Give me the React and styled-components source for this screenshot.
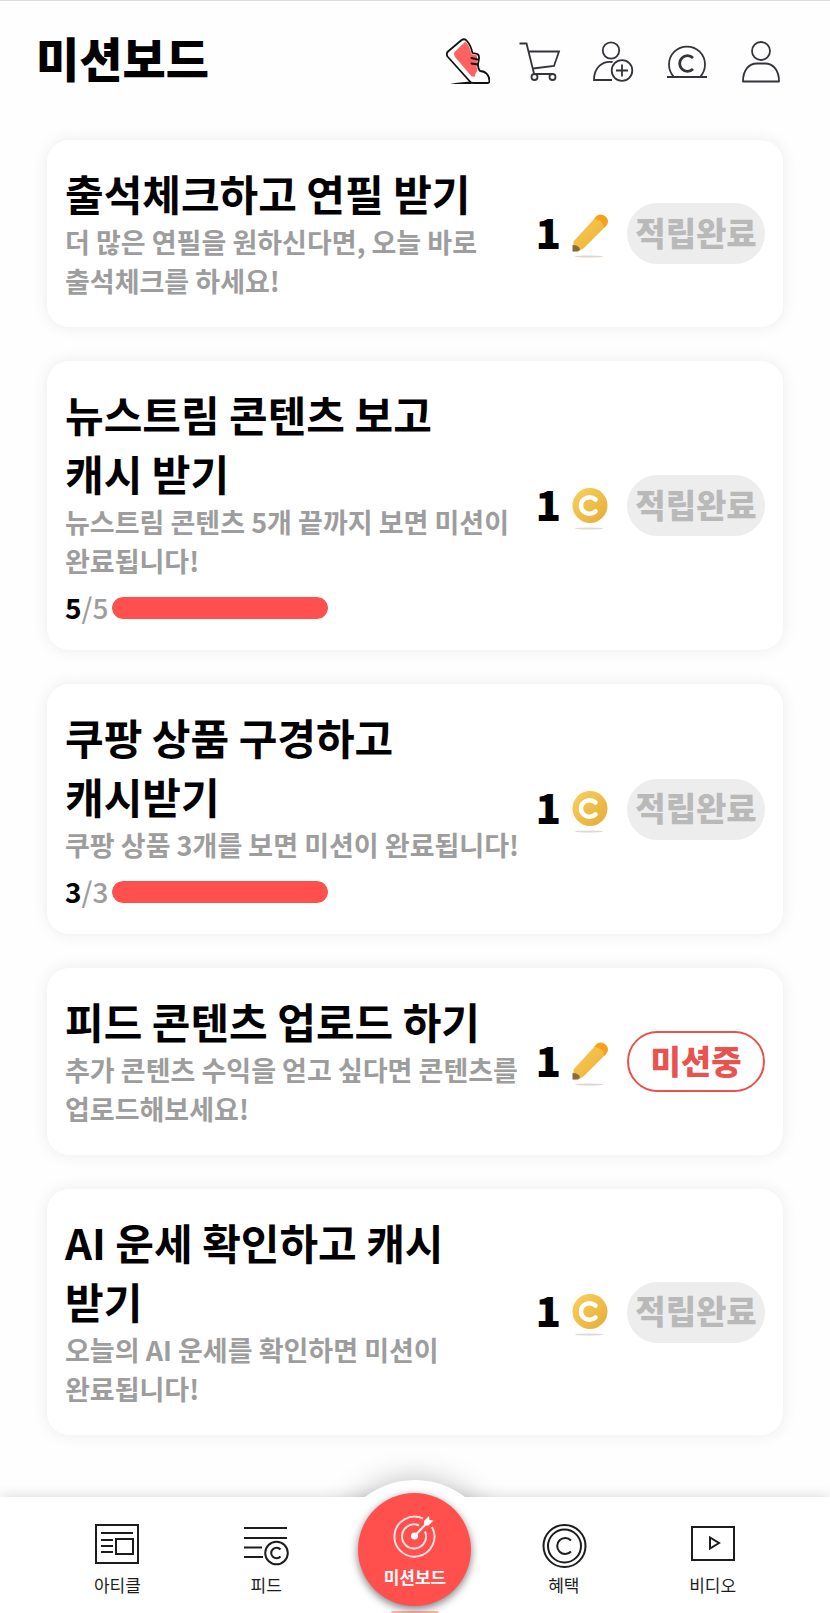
import React from 'react'
import styled, { createGlobalStyle, ThemeProvider } from 'styled-components';

const theme = {
  color: {
    primary: '#ff504d',
    danger: '#e8524f',
    black: '#000',
    icon: '#33343a',
    gray: '#9d9d9d',
    disabled: '#ededed',
    disabledText: '#b9b9b9',
  },
};

const GlobalStyle = createGlobalStyle`
  * {
    box-sizing: border-box;
  }

  body {
    margin: 0;
    background: #fefefe;
    color: #000;
    font-family: 'Noto Sans CJK KR', 'Noto Sans', sans-serif;
    word-break: keep-all;
  }

  h1, h2, p, ul {
    margin: 0;
    padding: 0;
  }
`;

const Page = styled.div`
  min-height: 100vh;
  display: flex;
  flex-direction: column;
  border-top: 1px solid #dcdcdc;
`;

const Header = styled.header`
  height: 122px;
  padding: 0 48px 0 36px;
  display: flex;
  justify-content: space-between;
  align-items: center;
`;

const PageTitle = styled.h1`
  padding-bottom: 10px;
  font-size: 47px;
  font-weight: 900;
  line-height: 60px;
`;

const Tools = styled.div`
  display: flex;
  gap: 29px;
`;

const IconButton = styled.button`
  width: 44px;
  height: 48px;
  padding: 0;
  border: 0;
  background: none;
  color: ${({ theme }) => theme.color.icon};
  cursor: pointer;

  svg {
    display: block;
  }
`;

const MissionList = styled.ul`
  flex: 1;
  padding: 17px 47px 59px;
  display: flex;
  flex-direction: column;
  gap: 34px;
  list-style: none;
`;

const Card = styled.li`
  padding: 23px 18px 27px;
  display: flex;
  background: #fff;
  border-radius: 22px;
  box-shadow: 0 0 16px rgba(0, 0, 0, 0.08);
`;

const Content = styled.div`
  flex: 1;
  padding-right: 16px;
`;

const Title = styled.h2`
  padding-right: 24px;
  font-size: 42px;
  font-weight: 700;
  line-height: 59px;
`;

const Description = styled.p`
  color: ${({ theme }) => theme.color.gray};
  font-size: 27px;
  font-weight: 700;
  line-height: 39px;
`;

const Progress = styled.div`
  height: 31px;
  margin-top: 12px;
  display: flex;
  align-items: center;
  gap: 4px;
`;

const Count = styled.span`
  color: ${({ theme }) => theme.color.gray};
  font-size: 28px;
  font-weight: 500;
  line-height: 31px;

  strong {
    color: ${({ theme }) => theme.color.black};
    font-weight: 700;
  }
`;

const Track = styled.div`
  width: 216px;
  height: 22px;
  border-radius: 11px;
  background: ${({ theme }) => theme.color.disabled};
  overflow: hidden;
`;

const Fill = styled.div`
  height: 100%;
  border-radius: 11px;
  background: ${({ theme }) => theme.color.primary};
`;

const Side = styled.div`
  padding-top: 4px;
  display: flex;
  align-items: center;
`;

const Amount = styled.span`
  padding-bottom: 6px;
  font-size: 42px;
  font-weight: 900;
  line-height: 60px;
`;

const Reward = styled.div`
  margin-right: 18px;
  display: flex;
  align-items: center;
  gap: 10px;
`;

const StatusButton = styled.button`
  width: 138px;
  height: 61px;
  padding: 0 0 4px;
  flex: none;
  border: ${({ $active, theme }) => ($active ? `2px solid ${theme.color.danger}` : '0')};
  border-radius: 31px;
  background: ${({ $active, theme }) => ($active ? '#fff' : theme.color.disabled)};
  color: ${({ $active, theme }) => ($active ? theme.color.danger : theme.color.disabledText)};
  font-family: inherit;
  font-size: 33px;
  font-weight: 900;
  line-height: 48px;
  white-space: nowrap;
`;

const NavBar = styled.nav`
  height: 116px;
  padding: 0 43px;
  position: relative;
  display: grid;
  grid-template-columns: repeat(5, 1fr);
  background: #fff;
  box-shadow: 0 -2px 12px rgba(0, 0, 0, 0.12);
`;

const NavItem = styled.a`
  padding-top: 24px;
  display: flex;
  flex-direction: column;
  align-items: center;
  gap: 6px;
  position: relative;
  color: #1c1c1c;
  font-size: 17px;
  font-weight: 400;
  line-height: 24px;
  text-decoration: none;
`;

// white bump behind the round button, clipped at the bar's bottom edge
const Bump = styled.span`
  position: absolute;
  left: 50%;
  bottom: 0;
  width: 260px;
  height: 166px;
  transform: translateX(-50%);
  overflow: hidden;

  &::before {
    content: '';
    position: absolute;
    top: 33px;
    left: 48px;
    width: 164px;
    height: 164px;
    border-radius: 50%;
    background: #fff;
    box-shadow: 0 0 30px rgba(0, 0, 0, 0.26);
  }

  &::after {
    content: '';
    position: absolute;
    left: 0;
    right: 0;
    bottom: 0;
    height: 116px;
    background: #fff;
  }
`;

// top of the glow under the round button
const Glow = styled.span`
  position: absolute;
  left: 50%;
  bottom: 0;
  width: 48px;
  height: 2px;
  transform: translateX(-50%);
  border-radius: 24px 24px 0 0;
  background: #ffb5b3;
`;

const MainItem = styled.a`
  width: 113px;
  height: 113px;
  margin-top: -4px;
  padding-top: 19px;
  position: relative;
  justify-self: center;
  display: flex;
  flex-direction: column;
  align-items: center;
  gap: 5px;
  border-radius: 50%;
  background: ${({ theme }) => theme.color.primary};
  box-shadow: 0 3px 8px rgba(0, 0, 0, 0.5);
  color: #fff;
  font-size: 17px;
  font-weight: 700;
  line-height: 28px;
  text-decoration: none;
`;

const ShoeIcon = () => (
  <svg width="44" height="48" viewBox="0 0 44 48" fill="none" aria-hidden="true">
    <path d="M2 13.500 15 2.500c2-1.500 4.500-1.500 6 .5 3 3.500 4.500 7.500 5.500 12 2 .5 4 0 5.500 1.500s1 5 .5 7c-1 3.500-.5 7 1.500 9.500 5.500 0 9.500 4.500 9.500 10 0 1-.5 2-2 2H27c-1.500 0-2.500-.5-3.500-2L1.500 18.500c-1.200-2-1-3.500.5-5z" fill="#fff" stroke="#111" strokeWidth="1.800" strokeLinejoin="round" />
    <path d="M9 13.500 19.500 3.500c3.500 3.500 5 8 6 12.500l5.500 1.500v8c-1 3 0 5 .5 7.500-1.500 1-2.500 3-2.500 5.500-2 .5-3.500 0-5-2L9 19c-1-2-1.500-4 0-5.500z" fill="#ff6260" />
    <path d="m25.500 20 6 1.500M25.500 25.500l6 1" stroke="#111" strokeWidth="2" strokeLinecap="round" />
    <path d="M4 45.500 24 43.500l2 2.500H10z" fill="#111" />
  </svg>
)

const CartIcon = () => (
  <svg width="44" height="48" viewBox="0 0 44 48" fill="none" stroke="currentColor" strokeWidth="1.800" aria-hidden="true">
    <path d="M.5 5.500h7l7.500 30M10 13.500h30l-5 14.500-21 2.500M15 36h19" />
    <circle cx="15.500" cy="39" r="3" fill="#fff" />
    <circle cx="33.500" cy="39" r="3" fill="#fff" />
  </svg>
)

const UserAddIcon = () => (
  <svg width="44" height="48" viewBox="0 0 44 48" fill="none" stroke="currentColor" strokeWidth="1.800" aria-hidden="true">
    <circle cx="19" cy="12.500" r="8.200" />
    <path d="M20.500 24C10 22.500 2 30 2 42h18" />
    <circle cx="30" cy="32.500" r="10.300" />
    <path d="M30 26.500v12M24 32.500h12" />
  </svg>
)

const CoinSlotIcon = () => (
  <svg width="44" height="48" viewBox="0 0 44 48" fill="none" stroke="currentColor" strokeWidth="1.800" aria-hidden="true">
    <path d="M2 39h40M9 39A18 18 0 1 1 35 39" />
    <path d="M28 20a7.800 7.800 0 1 0 0 11" strokeWidth="2.800" />
  </svg>
)

const UserIcon = () => (
  <svg width="44" height="48" viewBox="0 0 44 48" fill="none" stroke="currentColor" strokeWidth="1.800" strokeLinejoin="round" aria-hidden="true">
    <circle cx="23" cy="13" r="9" />
    <path d="M5 43.500C5 32 11 25.500 19 25.500h8c8 0 14 6.500 14 18z" />
  </svg>
)

const PencilIcon = () => (
  <svg width="38" height="48" viewBox="0 0 38 48" aria-hidden="true">
    <defs>
      <linearGradient id="pencil" x1="0" y1="0" x2="1" y2="1">
        <stop offset="0" stopColor="#f7cb55" />
        <stop offset="1" stopColor="#ecb036" />
      </linearGradient>
    </defs>
    <path d="M2.500 31.500 24 8c3.500-4 7.500-4 11-.5 2.500 3 2 6-.5 9L13 38l-5 3-6 .5z" fill="url(#pencil)" />
    <path d="M24 8c3-4.500 7-4.500 10.500-1.500 3.500 3.500 3 6.500.5 9.500l-1.500 2c-1-5-4.500-8.500-10.500-9z" fill="#f8a01c" />
    <path d="M1.500 35v6.500H7l2-2c-.5-3-3-4.500-7.500-4.500z" fill="#8a6b36" />
    <ellipse cx="18" cy="46.500" rx="14" ry="1" fill="#dfd5cf" />
  </svg>
)

const CoinIcon = () => (
  <svg width="38" height="48" viewBox="0 0 38 48" fill="none" aria-hidden="true">
    <defs>
      <linearGradient id="coin" x1="0" y1="0" x2="1" y2="1">
        <stop offset="0" stopColor="#f9d15c" />
        <stop offset="1" stopColor="#e5ab38" />
      </linearGradient>
    </defs>
    <circle cx="19" cy="23.500" r="17.500" fill="url(#coin)" />
    <path d="M24.500 17.500c-6-5-14.500-1-14.500 6s8.500 11 14.500 6" stroke="#fff" strokeWidth="4.500" strokeLinecap="round" />
    <ellipse cx="18" cy="46.500" rx="14" ry="1" fill="#dfd9d2" />
  </svg>
)

const ArticleIcon = () => (
  <svg width="46" height="46" viewBox="0 0 46 46" fill="none" stroke="currentColor" strokeWidth="2" aria-hidden="true">
    <path d="M2 4h42v38H2zM7 12h32M7 19h12M7 25h12M7 31h12M22 18h17v15H22z" />
  </svg>
)

const FeedIcon = () => (
  <svg width="46" height="46" viewBox="0 0 46 46" fill="none" stroke="currentColor" strokeWidth="2" aria-hidden="true">
    <path d="M1 7h43M1 17h43M1 26.500h18M1 36h19" />
    <circle cx="33.500" cy="32" r="11.300" fill="#fff" />
    <path d="M37.500 28.500a5.300 5.300 0 1 0 0 7" />
  </svg>
)

const TargetIcon = () => (
  <svg width="46" height="46" viewBox="0 0 46 46" fill="none" stroke="#ffe3e2" strokeWidth="2" aria-hidden="true">
    <path d="M31 6.500A20 20 0 1 0 40 15M27 13.500a12 12 0 1 0 6 6" />
    <circle cx="22.500" cy="24" r="3.500" fill="#fff" stroke="none" />
    <path d="M22.500 24 35 11" stroke="#fff" />
    <path d="M32 13.500V9l5-5 .5 4 4 .5-5 5z" fill="#fff" stroke="none" />
  </svg>
)

const BenefitIcon = () => (
  <svg width="46" height="46" viewBox="0 0 46 46" fill="none" stroke="currentColor" strokeWidth="2" overflow="visible" aria-hidden="true">
    <circle cx="23.500" cy="25" r="21" />
    <circle cx="23.500" cy="25" r="16.500" />
    <path d="M30 19.500a8 8 0 1 0 0 11" />
  </svg>
)

const VideoIcon = () => (
  <svg width="46" height="46" viewBox="0 0 46 46" fill="none" stroke="currentColor" strokeWidth="2" aria-hidden="true">
    <path d="M2 6h42v33H2zM20 16.500v11l9-5.500z" />
  </svg>
)

const tools = [
  { label: '걷기', icon: <ShoeIcon /> },
  { label: '장바구니', icon: <CartIcon /> },
  { label: '친구 초대', icon: <UserAddIcon /> },
  { label: '캐시', icon: <CoinSlotIcon /> },
  { label: '내 정보', icon: <UserIcon /> },
]

const missions = [
  {
    id: 1,
    title: '출석체크하고 연필 받기',
    description: '더 많은 연필을 원하신다면, 오늘 바로 출석체크를 하세요!',
    reward: 'pencil',
    done: true,
  },
  {
    id: 2,
    title: '뉴스트림 콘텐츠 보고 캐시 받기',
    description: '뉴스트림 콘텐츠 5개 끝까지 보면 미션이 완료됩니다!',
    reward: 'coin',
    count: 5,
    total: 5,
    done: true,
  },
  {
    id: 3,
    title: '쿠팡 상품 구경하고 캐시받기',
    description: '쿠팡 상품 3개를 보면 미션이 완료됩니다!',
    reward: 'coin',
    count: 3,
    total: 3,
    done: true,
  },
  {
    id: 4,
    title: '피드 콘텐츠 업로드 하기',
    description: '추가 콘텐츠 수익을 얻고 싶다면 콘텐츠를 업로드해보세요!',
    reward: 'pencil',
    done: false,
  },
  {
    id: 5,
    title: 'AI 운세 확인하고 캐시 받기',
    description: '오늘의 AI 운세를 확인하면 미션이 완료됩니다!',
    reward: 'coin',
    done: true,
  },
]

const Mission = ({ mission }) => {
  const { title, description, reward, count, total, done } = mission;

  return (
    <Card>
      <Content>
        <Title>{title}</Title>
        <Description>{description}</Description>
        {total && (
          <Progress>
            <Count><strong>{count}</strong>/{total}</Count>
            <Track>
              <Fill style={{ width: `${(count / total) * 100}%` }} />
            </Track>
          </Progress>
        )}
      </Content>
      <Side>
        <Reward>
          <Amount>1</Amount>
          {reward === 'pencil' ? <PencilIcon /> : <CoinIcon />}
        </Reward>
        <StatusButton type="button" $active={!done} disabled={done}>
          {done ? '적립완료' : '미션중'}
        </StatusButton>
      </Side>
    </Card>
  )
}

const App = () => (
  <ThemeProvider theme={theme}>
    <GlobalStyle />
    <Page>
      <Header>
        <PageTitle>미션보드</PageTitle>
        <Tools>
          {tools.map(tool => (
            <IconButton key={tool.label} type="button" aria-label={tool.label}>
              {tool.icon}
            </IconButton>
          ))}
        </Tools>
      </Header>
      <MissionList>
        {missions.map(mission => (
          <Mission key={mission.id} mission={mission} />
        ))}
      </MissionList>
      <NavBar>
        <Bump />
        <Glow />
        <NavItem href="#article"><ArticleIcon />아티클</NavItem>
        <NavItem href="#feed"><FeedIcon />피드</NavItem>
        <MainItem href="#mission"><TargetIcon />미션보드</MainItem>
        <NavItem href="#benefit"><BenefitIcon />혜택</NavItem>
        <NavItem href="#video"><VideoIcon />비디오</NavItem>
      </NavBar>
    </Page>
  </ThemeProvider>
)

export default App;
